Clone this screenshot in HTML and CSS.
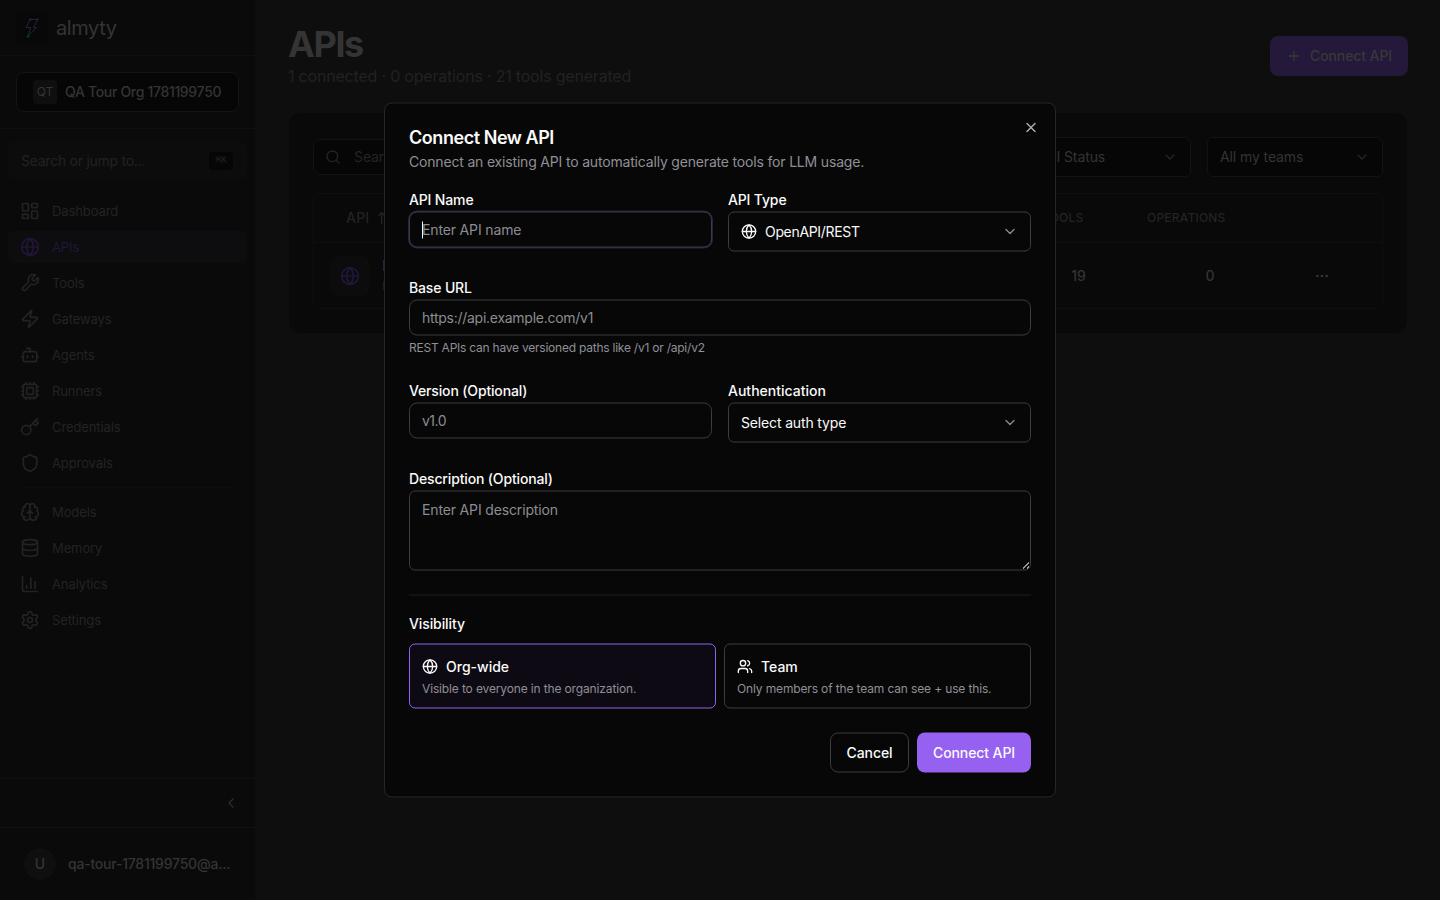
FILE: index.html
```html
<!DOCTYPE html>
<html lang="en">
<head>
    <meta charset="UTF-8">
    <meta name="viewport" content="width=device-width, initial-scale=1.0">
    <title>APIs - almyty</title>
    <link rel="stylesheet" href="styles.css">
</head>
<body>
    <!-- shared icons -->
    <svg class="sprite">
        <symbol id="globe" viewBox="0 0 24 24"><circle cx="12" cy="12" r="10"/><path d="M12 2a14.5 14.5 0 0 0 0 20 14.5 14.5 0 0 0 0-20"/><path d="M2 12h20"/></symbol>
        <symbol id="chevron" viewBox="0 0 24 24"><path d="m6 9 6 6 6-6"/></symbol>
    </svg>

    <div class="app">
        <aside class="sidebar">
            <div class="brand">
                <svg class="logo" viewBox="0 0 32 32">
                    <defs><linearGradient id="bolt" x1="0" y1="0" x2="0" y2="1"><stop offset="0" stop-color="#28203f"/><stop offset="1" stop-color="#0d3438"/></linearGradient></defs>
                    <path class="bolt" d="M14.5 7.5H21.5L17.500 15.500H20.500L12 24.500 14.500 15.500H10.500Z"/>
                    <g class="bolt-nodes"><circle cx="14.5" cy="7.5" r="1.3"/><circle cx="21.3" cy="7.5" r="1.3"/><circle class="teal" cx="12" cy="24.5" r="1.3"/></g>
                </svg>
                <span class="brand-name">almyty</span>
            </div>
            <div class="org">
                <button class="org-button"><span class="org-badge">QT</span><span class="org-name">QA Tour Org 1781199750</span></button>
            </div>
            <div class="jump"><span class="jump-text">Search or jump to...</span><kbd>⌘K</kbd></div>
            <nav>
                <a class="nav-item"><svg viewBox="0 0 24 24"><rect width="7" height="9" x="3" y="3" rx="1"/><rect width="7" height="5" x="14" y="3" rx="1"/><rect width="7" height="9" x="14" y="12" rx="1"/><rect width="7" height="5" x="3" y="16" rx="1"/></svg><span>Dashboard</span></a>
                <a class="nav-item active"><svg><use href="#globe"/></svg><span>APIs</span></a>
                <a class="nav-item"><svg viewBox="0 0 24 24"><path d="M14.7 6.3a1 1 0 0 0 0 1.4l1.6 1.6a1 1 0 0 0 1.4 0l3.77-3.77a6 6 0 0 1-7.94 7.94l-6.91 6.91a2.12 2.12 0 0 1-3-3l6.91-6.91a6 6 0 0 1 7.94-7.94l-3.76 3.76z"/></svg><span>Tools</span></a>
                <a class="nav-item"><svg viewBox="0 0 24 24"><path d="M4 14a1 1 0 0 1-.78-1.63l9.9-10.2a.5.5 0 0 1 .86.46l-1.92 6.02A1 1 0 0 0 13 10h7a1 1 0 0 1 .78 1.63l-9.9 10.2a.5.5 0 0 1-.86-.46l1.92-6.02A1 1 0 0 0 11 14z"/></svg><span>Gateways</span></a>
                <a class="nav-item"><svg viewBox="0 0 24 24"><path d="M12 8V4H8"/><rect width="16" height="12" x="4" y="8" rx="2"/><path d="M2 14h2M20 14h2M15 13v2M9 13v2"/></svg><span>Agents</span></a>
                <a class="nav-item"><svg viewBox="0 0 24 24"><rect width="16" height="16" x="4" y="4" rx="2"/><rect width="8" height="8" x="8" y="8" rx="1"/><path d="M12 20v2M12 2v2M17 20v2M17 2v2M2 12h2M2 17h2M2 7h2M20 12h2M20 17h2M20 7h2M7 20v2M7 2v2"/></svg><span>Runners</span></a>
                <a class="nav-item"><svg viewBox="0 0 24 24"><path d="m15.5 7.5 2.3 2.3a1 1 0 0 0 1.4 0l2.1-2.1a1 1 0 0 0 0-1.4L19 4M21 2l-9.6 9.6"/><circle cx="7.5" cy="15.5" r="5.5"/></svg><span>Credentials</span></a>
                <a class="nav-item"><svg viewBox="0 0 24 24"><path d="M20 13c0 5-3.5 7.5-7.66 8.95a1 1 0 0 1-.67-.01C7.5 20.5 4 18 4 13V6a1 1 0 0 1 1-1c2 0 4.5-1.2 6.24-2.72a1.17 1.17 0 0 1 1.52 0C14.51 3.81 17 5 19 5a1 1 0 0 1 1 1z"/></svg><span>Approvals</span></a>
                <div class="nav-divider"></div>
                <a class="nav-item"><svg viewBox="0 0 24 24"><path d="M12 18V5M15 13a4.17 4.17 0 0 1-3-4 4.17 4.17 0 0 1-3 4"/><path d="M17.598 6.5A3 3 0 1 0 12 5a3 3 0 1 0-5.598 1.5"/><path d="M17.997 5.125a4 4 0 0 1 2.526 5.77M18 18a4 4 0 0 0 2-7.464"/><path d="M19.967 17.483A4 4 0 1 1 12 18a4 4 0 1 1-7.967-.517"/><path d="M6 18a4 4 0 0 1-2-7.464M6.003 5.125a4 4 0 0 0-2.526 5.77"/></svg><span>Models</span></a>
                <a class="nav-item"><svg viewBox="0 0 24 24"><ellipse cx="12" cy="5" rx="9" ry="3"/><path d="M3 5v14a9 3 0 0 0 18 0V5"/><path d="M3 12a9 3 0 0 0 18 0"/></svg><span>Memory</span></a>
                <a class="nav-item"><svg viewBox="0 0 24 24"><path d="M3 3v16a2 2 0 0 0 2 2h16M18 17V9M13 17V5M8 17v-3"/></svg><span>Analytics</span></a>
                <a class="nav-item"><svg viewBox="0 0 24 24"><path d="M9.671 4.136a2.34 2.34 0 0 1 4.659 0 2.34 2.34 0 0 0 3.319 1.915 2.34 2.34 0 0 1 2.33 4.033 2.34 2.34 0 0 0 0 3.831 2.34 2.34 0 0 1-2.33 4.033 2.34 2.34 0 0 0-3.319 1.915 2.34 2.34 0 0 1-4.659 0 2.34 2.34 0 0 0-3.32-1.915 2.34 2.34 0 0 1-2.33-4.033 2.34 2.34 0 0 0 0-3.831A2.34 2.34 0 0 1 6.35 6.051a2.34 2.34 0 0 0 3.319-1.915"/><circle cx="12" cy="12" r="3"/></svg><span>Settings</span></a>
            </nav>
            <div class="collapse"><svg viewBox="0 0 24 24"><path d="m15 18-6-6 6-6"/></svg></div>
            <div class="user"><span class="avatar">U</span><span class="user-name">qa-tour-1781199750@a...</span></div>
        </aside>

        <main>
            <header class="page-header">
                <div>
                    <h1>APIs</h1>
                    <p class="subtitle">1 connected · 0 operations · 21 tools generated</p>
                </div>
                <button class="page-connect"><svg viewBox="0 0 24 24"><path d="M5 12h14M12 5v14"/></svg><span>Connect API</span></button>
            </header>
            <section class="panel">
                <div class="filters">
                    <div class="search"><svg viewBox="0 0 24 24"><circle cx="11" cy="11" r="8"/><path d="m21 21-4.3-4.3"/></svg><span>Search</span></div>
                    <div class="filter status"><span>All Status</span><svg><use href="#chevron"/></svg></div>
                    <div class="filter"><span>All my teams</span><svg><use href="#chevron"/></svg></div>
                </div>
                <div class="table">
                    <div class="table-row table-head">
                        <span class="col-api">API<svg viewBox="0 0 24 24"><path d="m21 16-4 4-4-4M17 20V4M3 8l4-4 4 4M7 4v16"/></svg></span>
                        <span class="col-num">TOOLS</span>
                        <span class="col-num">OPERATIONS</span>
                        <span></span>
                    </div>
                    <div class="table-row">
                        <div class="api-cell">
                            <span class="api-icon"><svg><use href="#globe"/></svg></span>
                            <div><div>Pets</div><div class="api-kind">Rest</div></div>
                        </div>
                        <span class="num">19</span>
                        <span class="num">0</span>
                        <svg class="dots" viewBox="0 0 24 24"><circle cx="12" cy="12" r="1"/><circle cx="19" cy="12" r="1"/><circle cx="5" cy="12" r="1"/></svg>
                    </div>
                </div>
            </section>
        </main>
    </div>

    <div class="dialog">
        <h2>Connect New API</h2>
        <p class="dialog-text">Connect an existing API to automatically generate tools for LLM usage.</p>
        <button class="close"><svg viewBox="0 0 24 24"><path d="M18 6 6 18M6 6l12 12"/></svg></button>

        <form>
            <div class="two-cols">
                <div class="field">
                    <label>API Name</label>
                    <div class="input-wrap"><input class="focused" type="text" placeholder="Enter API name"><span class="caret"></span></div>
                </div>
                <div class="field">
                    <label>API Type</label>
                    <div class="select"><svg><use href="#globe"/></svg><span class="type-name">OpenAPI/REST</span><svg class="arrow"><use href="#chevron"/></svg></div>
                </div>
            </div>
            <div class="field">
                <label>Base URL</label>
                <input class="url" type="text" placeholder="https://api.example.com/v1">
                <p class="hint">REST APIs can have versioned paths like /v1 or /api/v2</p>
            </div>
            <div class="two-cols">
                <div class="field">
                    <label>Version (Optional)</label>
                    <input class="version" type="text" placeholder="v1.0">
                </div>
                <div class="field">
                    <label class="auth-label">Authentication</label>
                    <div class="select"><span>Select auth type</span><svg class="arrow"><use href="#chevron"/></svg></div>
                </div>
            </div>
            <div class="field">
                <label>Description (Optional)</label>
                <textarea placeholder="Enter API description"></textarea>
            </div>
            <div class="visibility">
                <label>Visibility</label>
                <div class="options">
                    <div class="option selected">
                        <div class="option-title"><svg><use href="#globe"/></svg><span>Org-wide</span></div>
                        <p class="option-text">Visible to everyone in the organization.</p>
                    </div>
                    <div class="option">
                        <div class="option-title"><svg viewBox="0 0 24 24"><path d="M16 21v-2a4 4 0 0 0-4-4H6a4 4 0 0 0-4 4v2"/><circle cx="9" cy="7" r="4"/><path d="M22 21v-2a4 4 0 0 0-3-3.87M16 3.13a4 4 0 0 1 0 7.75"/></svg><span>Team</span></div>
                        <p class="option-text">Only members of the team can see + use this.</p>
                    </div>
                </div>
            </div>
            <div class="actions">
                <button type="button" class="cancel">Cancel</button>
                <button type="button" class="submit">Connect API</button>
            </div>
        </form>
    </div>
</body>
</html>
```

FILE: styles.css
```css
* {
    box-sizing: border-box;
}
body {
    margin: 0;
    height: 900px;
    overflow: hidden;
    background-color: #0e0e0e;
    color: #343434;
    font-family: Inter, "Open Sans", sans-serif;
    font-size: 14px;
    line-height: 20px;
    letter-spacing: -0.1px;
}
h1, h2, p {
    margin: 0;
}
button, input, textarea {
    font: inherit;
    letter-spacing: inherit;
    color: inherit;
}
svg {
    display: block;
    flex-shrink: 0;
    width: 16px;
    height: 16px;
    fill: none;
    stroke: currentColor;
    stroke-width: 2;
    stroke-linecap: round;
    stroke-linejoin: round;
}
.sprite {
    display: none;
}
.app {
    display: flex;
    height: 900px;
}

/* sidebar */
.sidebar {
    display: flex;
    flex-direction: column;
    width: 256px;
    flex-shrink: 0;
    background-color: #0a0a0a;
    border-right: 1px solid #0d0d0d;
}
.brand {
    display: flex;
    align-items: center;
    gap: 8px;
    height: 56px;
    padding-left: 16px;
    border-bottom: 1px solid #101010;
}
.logo {
    width: 32px;
    height: 32px;
    border-radius: 6px;
    background-color: #080808;
}
.bolt {
    stroke: url(#bolt);
    stroke-width: 0.9;
}
.bolt-nodes {
    fill: #281e42;
    stroke: none;
}
.bolt-nodes .teal {
    fill: #0d3438;
}
.brand-name {
    font-size: 20px;
    line-height: 28px;
    letter-spacing: -0.4px;
}
.org {
    height: 73px;
    padding: 16px;
    border-bottom: 1px solid #101010;
}
.org-button {
    display: flex;
    align-items: center;
    gap: 8px;
    width: 223px;
    height: 40px;
    padding: 0 16px;
    background-color: #060606;
    border: 1px solid #141414;
    border-radius: 8px;
}
.org-badge {
    width: 24px;
    flex-shrink: 0;
    border-radius: 4px;
    background-color: #0f0f0f;
    font-size: 12px;
    line-height: 24px;
    text-align: center;
}
.org-name {
    font-weight: 500;
    letter-spacing: -0.32px;
    white-space: nowrap;
}
.jump {
    display: flex;
    align-items: center;
    justify-content: space-between;
    height: 39px;
    margin: 12px 8px 15px;
    padding: 0 14px 0 13px;
    border-radius: 8px;
    background-color: #0c0c0c;
    color: #222;
    letter-spacing: -0.26px;
}
kbd {
    width: 24px;
    height: 18px;
    border-radius: 4px;
    background-color: #060606;
    font-family: "Liberation Mono", monospace;
    font-size: 10px;
    line-height: 17px;
    text-align: center;
}
nav {
    flex: 1;
    padding: 0 8px;
}
.nav-item {
    display: flex;
    align-items: center;
    gap: 12px;
    height: 32px;
    margin-bottom: 4px;
    padding: 0 12px;
    border-radius: 6px;
    color: #232323;
    font-size: 13px;
}
.nav-item svg {
    width: 20px;
    height: 20px;
}
.nav-item.active {
    background-color: #0d0d0f;
    color: #211638;
}
.nav-divider {
    height: 1px;
    margin: 8px 12px;
    background-color: #0d0d0d;
}
.collapse {
    display: flex;
    align-items: center;
    justify-content: flex-end;
    height: 49px;
    padding-right: 16px;
    border-top: 1px solid #101010;
    color: #2b2b2b;
}
.user {
    display: flex;
    align-items: center;
    gap: 12px;
    height: 73px;
    padding: 0 24px;
    border-top: 1px solid #101010;
}
.avatar {
    width: 32px;
    flex-shrink: 0;
    border-radius: 50%;
    background-color: #0f0f0f;
    line-height: 32px;
    text-align: center;
    font-weight: 500;
}
.user-name {
    white-space: nowrap;
    font-weight: 500;
    letter-spacing: -0.22px;
}

/* page */
main {
    flex: 1;
    padding: 24px 33px 0 32px;
}
.page-header {
    display: flex;
    justify-content: space-between;
    height: 89px;
    margin-right: -1px;
}
h1 {
    font-size: 36px;
    line-height: 40px;
    font-weight: 700;
    letter-spacing: -1.4px;
}
.subtitle {
    color: #222;
    font-size: 16px;
    line-height: 24px;
    letter-spacing: -0.2px;
}
.page-connect {
    display: flex;
    align-items: center;
    gap: 8px;
    width: 138px;
    height: 40px;
    margin-top: 12px;
    padding: 0 16px;
    border: none;
    border-radius: 8px;
    background-color: #24193a;
    color: #383838;
    font-weight: 500;
    white-space: nowrap;
}
.panel {
    height: 220px;
    margin-left: 1px;
    padding: 24px;
    border-radius: 12px;
    background-color: #090909;
}
.filters {
    display: flex;
    align-items: center;
    gap: 16px;
    height: 40px;
}
.search {
    display: flex;
    align-items: center;
    gap: 13px;
    flex: 1;
    height: 36px;
    padding-left: 11px;
    border: 1px solid #131313;
    border-radius: 8px;
    background-color: #060606;
    color: #242424;
}
.filter {
    display: flex;
    align-items: center;
    justify-content: space-between;
    width: 176px;
    height: 40px;
    padding: 0 12px;
    border: 1px solid #131313;
    border-radius: 6px;
    background-color: #060606;
}
.filter.status {
    width: 160px;
}
.filter svg {
    color: #242424;
}
.table {
    margin-top: 16px;
    border: 1px solid #0e0e0e;
    border-radius: 6px;
}
.table-row {
    display: grid;
    grid-template-columns: 1fr 105px 158px 93px;
    align-items: center;
    height: 65px;
}
.table-head {
    height: 49px;
    border-bottom: 1px solid #0e0e0e;
    color: #232323;
    font-size: 12px;
    font-weight: 500;
    letter-spacing: 0.2px;
}
.col-api {
    display: flex;
    align-items: center;
    gap: 8px;
    padding-left: 32px;
    font-size: 14px;
}
.col-num {
    padding-left: 16px;
}
.num {
    text-align: center;
    font-weight: 500;
}
.api-cell {
    display: flex;
    align-items: center;
    gap: 12px;
    padding-left: 16px;
}
.api-icon {
    display: flex;
    align-items: center;
    justify-content: center;
    width: 40px;
    height: 40px;
    border-radius: 8px;
    background-color: #0c0c0d;
    color: #211638;
}
.api-icon svg {
    width: 20px;
    height: 20px;
}
.api-kind {
    color: #232323;
    font-size: 12px;
}
.dots {
    margin-left: 25px;
}

/* dialog */
.dialog {
    position: absolute;
    top: 50%;
    left: 50%;
    width: 672px;
    height: 695px;
    padding: 24px;
    transform: translate(-50%, -50%);
    border: 1px solid #27272a;
    border-radius: 8px;
    background-color: #070707;
    color: #fafafa;
}
h2 {
    padding-top: 1px;
    font-size: 18px;
    line-height: 18px;
    font-weight: 600;
    letter-spacing: -0.45px;
}
.dialog-text {
    margin: 5px 0 16px;
    color: #8f8f96;
    letter-spacing: -0.18px;
}
.close {
    position: absolute;
    top: 16px;
    right: 16px;
    padding: 0;
    border: none;
    background: none;
    color: #b4b4b4;
}
.two-cols {
    display: grid;
    grid-template-columns: 1fr 1fr;
    gap: 16px;
}
form {
    display: flex;
    flex-direction: column;
    gap: 24px;
}
label {
    display: block;
    line-height: 24px;
    font-weight: 500;
    letter-spacing: -0.15px;
}
.auth-label {
    letter-spacing: 0;
}
.input-wrap {
    position: relative;
}
input, textarea, .select {
    display: block;
    width: 100%;
    height: 36px;
    padding: 0 12px 1px;
    border: 1px solid #3d3d40;
    border-radius: 8px;
    outline: none;
    background-color: #070707;
    letter-spacing: -0.15px;
}
input::placeholder, textarea::placeholder {
    color: #8c8c92;
    opacity: 1;
}
.url {
    letter-spacing: -0.27px;
}
.version {
    letter-spacing: -0.5px;
}
.focused {
    box-shadow: 0 0 0 1px #2c1f47;
}
.caret {
    position: absolute;
    top: 10px;
    left: 13px;
    width: 1px;
    height: 17px;
    background-color: #fafafa;
}
.select {
    display: flex;
    align-items: center;
    gap: 8px;
    height: 40px;
    padding-bottom: 0;
    border-radius: 6px;
}
.type-name {
    letter-spacing: -0.33px;
}
.select .arrow {
    margin-left: auto;
    color: #8a8a8e;
}
textarea {
    height: 80px;
    padding: 8px 12px;
    border-radius: 6px;
    resize: vertical;
    color-scheme: dark;
}
.hint {
    margin-top: 4px;
    color: #8f8f96;
    font-size: 12px;
    line-height: 15px;
    letter-spacing: -0.23px;
}
.visibility {
    padding-top: 16px;
    border-top: 1px solid #1f1f24;
}
.visibility label {
    letter-spacing: -0.1px;
}
.options {
    display: grid;
    grid-template-columns: 1fr 1fr;
    gap: 8px;
    margin-top: 8px;
}
.option {
    height: 65px;
    padding: 12px;
    border: 1px solid #3d3d40;
    border-radius: 6px;
}
.option.selected {
    border-color: #9461f0;
    background-color: #0e0a13;
}
.option-title {
    display: flex;
    align-items: center;
    gap: 8px;
    font-weight: 500;
    letter-spacing: 0;
}
.option-text {
    margin-top: 4px;
    color: #8f8f96;
    font-size: 12px;
    line-height: 15px;
    letter-spacing: -0.14px;
    white-space: nowrap;
}
.actions {
    display: flex;
    justify-content: flex-end;
    gap: 8px;
}
.actions button {
    width: 79px;
    height: 40px;
    padding: 0;
    border: 1px solid #3d3d40;
    border-radius: 8px;
    background-color: #070707;
    font-weight: 500;
}
.actions .submit {
    width: 114px;
    border: none;
    background-color: #9661f1;
}
```
